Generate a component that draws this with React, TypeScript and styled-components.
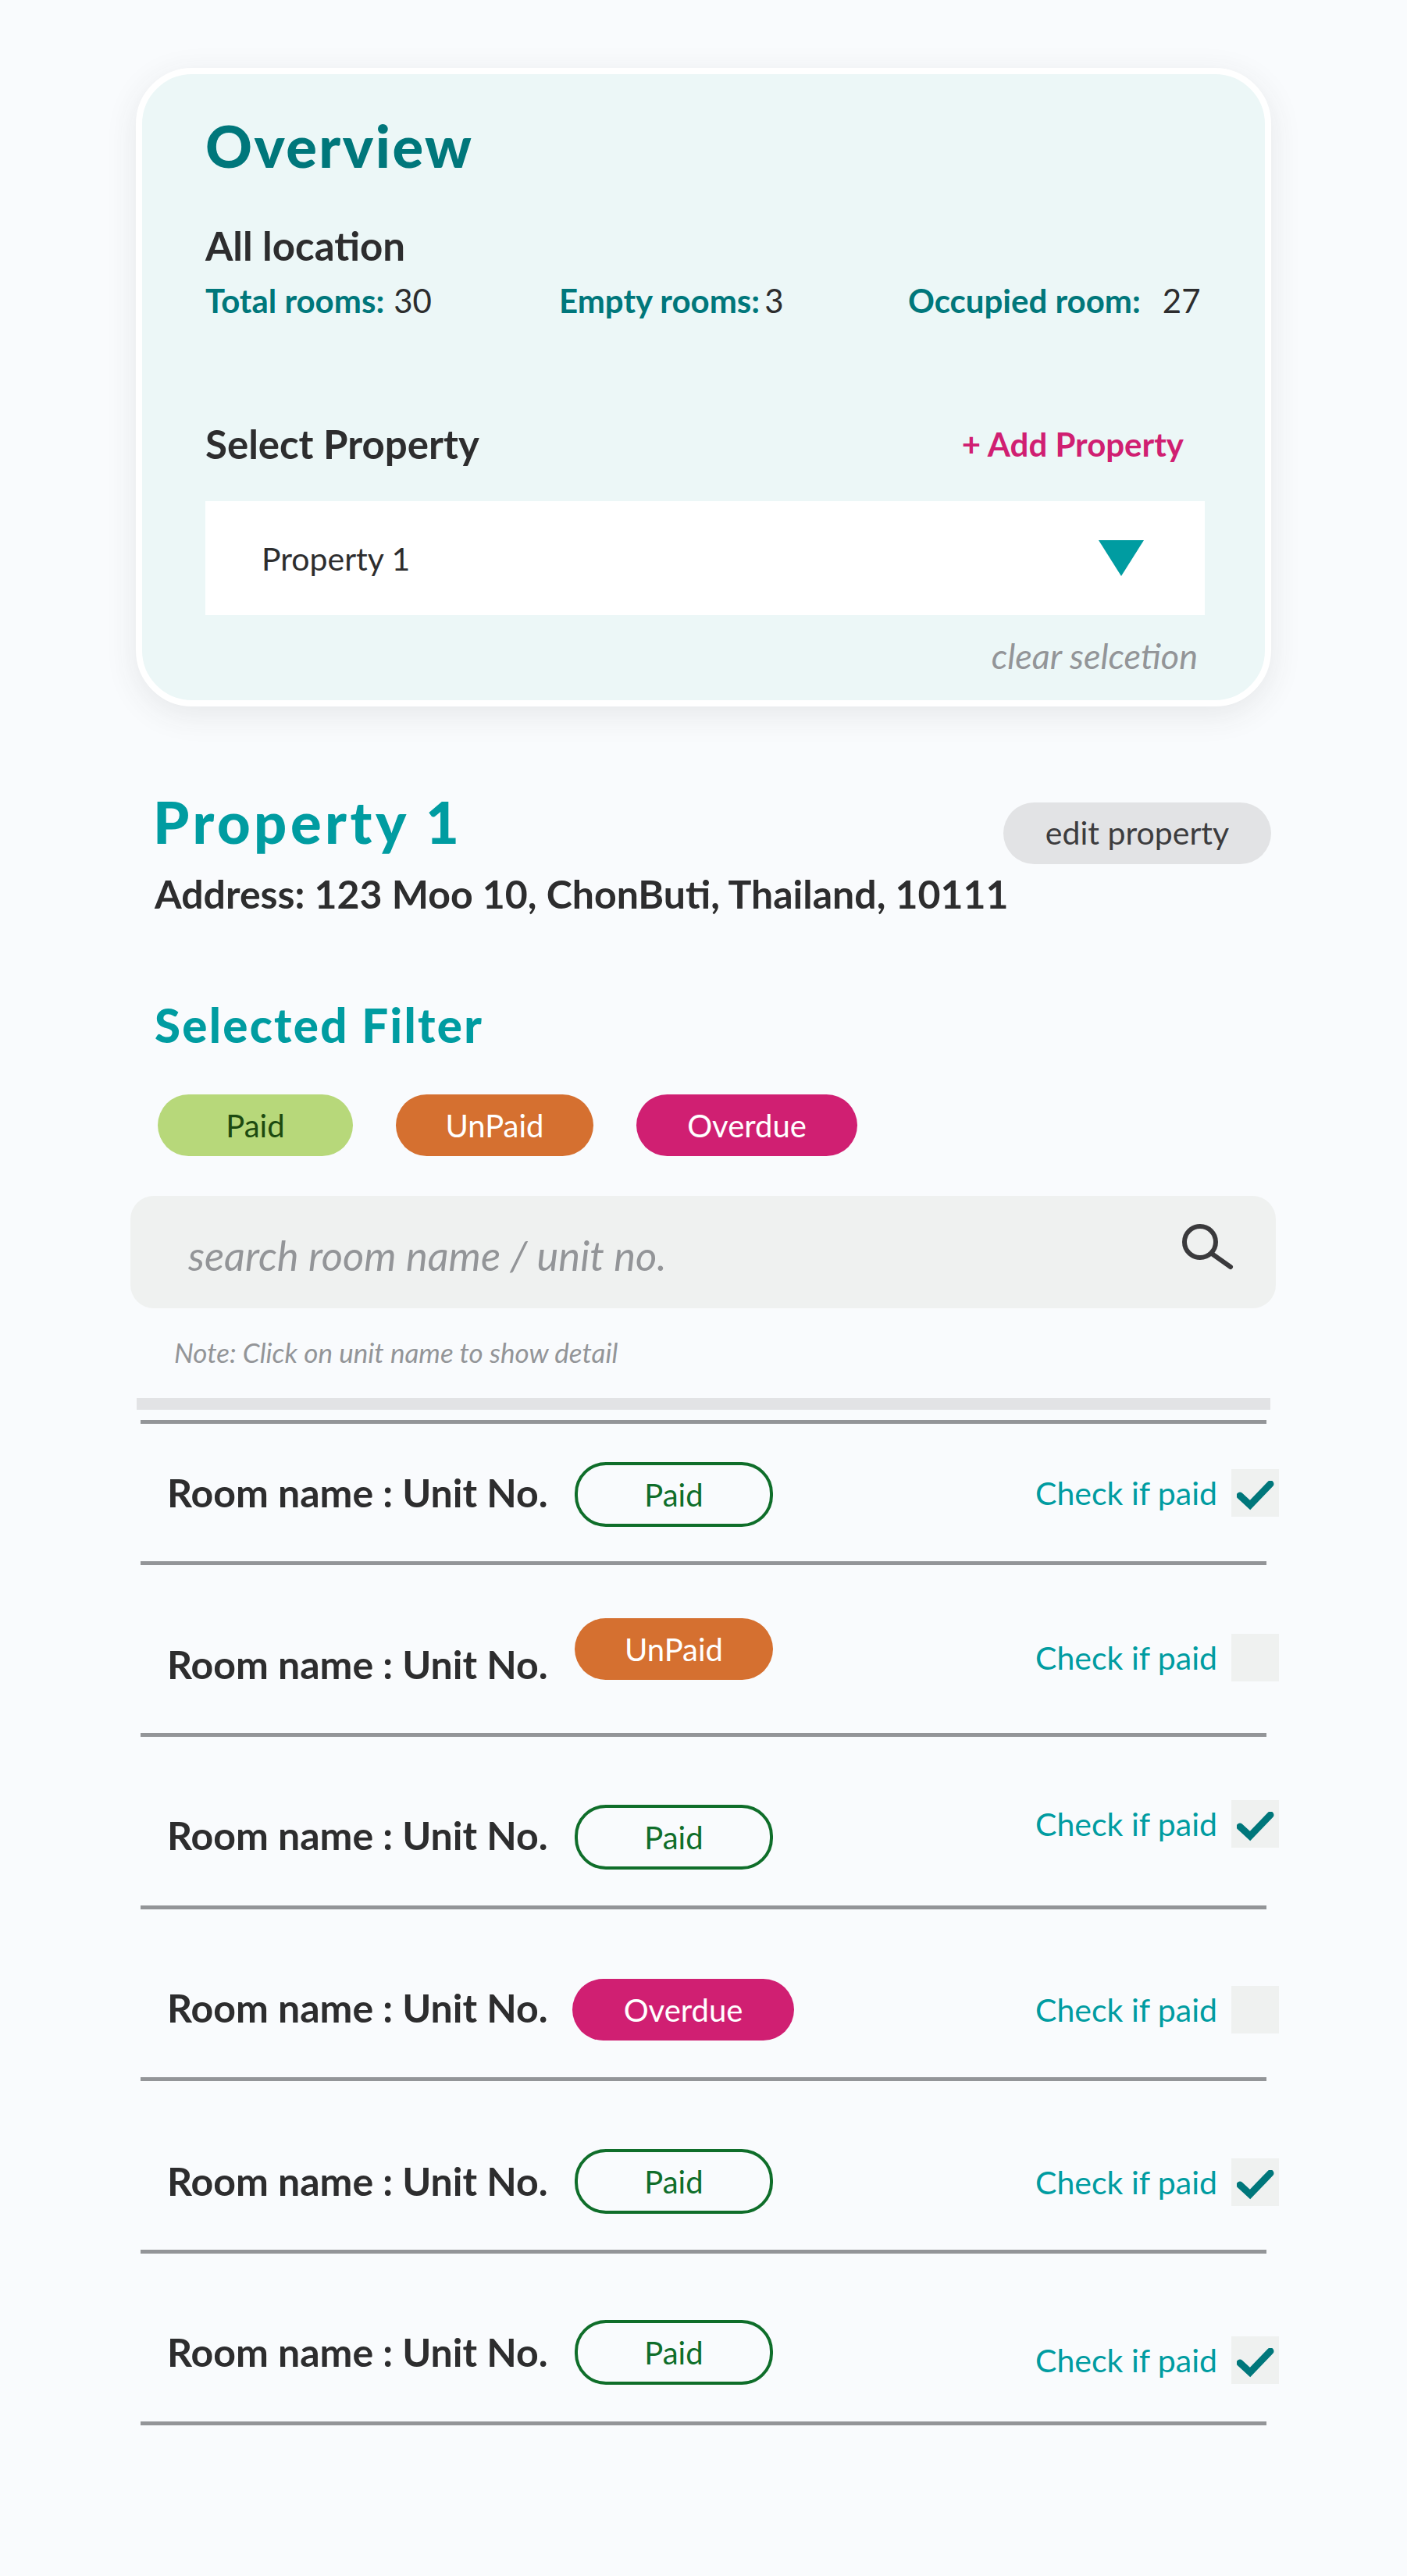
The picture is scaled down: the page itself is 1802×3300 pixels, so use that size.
import React from "react";
import styled, { createGlobalStyle } from "styled-components";

const GlobalStyle = createGlobalStyle`
  html, body {
    margin: 0;
    padding: 0;
    background: #f9fbfd;
    font-family: Lato, "Noto Sans", sans-serif;
    color: #2d2d2e;
  }
`;

const Page = styled.div`
  width: 1802px;
  height: 3300px;
  box-sizing: border-box;
  padding-top: 87px;
  overflow: hidden;
`;

const Card = styled.section`
  box-sizing: border-box;
  width: 1454px;
  height: 818px;
  margin-left: 174px;
  padding: 44px 77px 0 81px;
  background: #ecf7f7;
  border: 8px solid #fff;
  border-radius: 72px;
  box-shadow: 0 10px 40px rgba(60, 60, 60, 0.1);
`;

const Overview = styled.h1`
  margin: 0;
  height: 96px;
  font-size: 74px;
  line-height: 96px;
  font-weight: 900;
  letter-spacing: 2.5px;
  color: #00777b;
`;

const AllLocation = styled.h2`
  margin: 50px 0 0;
  height: 60px;
  font-size: 51px;
  line-height: 60px;
  font-weight: 700;
`;

const Stats = styled.div`
  display: flex;
  height: 56px;
  margin-top: 12px;
  font-size: 42px;
  line-height: 56px;
`;

const Stat = styled.div<{ $width: number }>`
  width: ${(p) => p.$width}px;
  display: flex;
  white-space: nowrap;
`;

const StatLabel = styled.span`
  font-weight: 700;
  color: #00777b;
`;

const StatValue = styled.span<{ $gap: number }>`
  margin-left: ${(p) => p.$gap}px;
`;

const SelectHead = styled.div`
  display: flex;
  justify-content: space-between;
  margin-top: 123px;
  height: 66px;
  padding-right: 27px;
`;

const SelectTitle = styled.h3`
  margin: 0;
  font-size: 51px;
  line-height: 66px;
  font-weight: 700;
`;

const AddLink = styled.a`
  font-size: 42px;
  line-height: 66px;
  font-weight: 700;
  color: #d01f72;
`;

const Select = styled.div`
  display: flex;
  align-items: center;
  justify-content: space-between;
  width: 1280px;
  height: 146px;
  margin-top: 40px;
  box-sizing: border-box;
  padding: 0 78px 0 72px;
  background: #fff;
  font-size: 41px;
`;

const Clear = styled.div`
  margin-top: 24px;
  padding-right: 9px;
  text-align: right;
  font-size: 45px;
  line-height: 56px;
  font-style: italic;
  color: #939598;
`;

const PropertyHead = styled.div`
  display: flex;
  justify-content: space-between;
  width: 1430px;
  margin: 100px 0 0 196px;
`;

const PropertyTitle = styled.h1`
  margin: 0;
  font-size: 74px;
  line-height: 96px;
  font-weight: 900;
  letter-spacing: 4.5px;
  color: #009ca1;
`;

const EditButton = styled.button`
  width: 343px;
  height: 79px;
  margin: 23px -2px 0 0;
  padding: 0 0 3px;
  border: none;
  border-radius: 40px;
  background: #e2e3e5;
  color: #3c3c3e;
  font: 400 41px Lato, sans-serif;
`;

const Address = styled.p`
  margin: 4px 0 0 198px;
  font-size: 50px;
  line-height: 68px;
  font-weight: 700;
`;

const FilterTitle = styled.h2`
  margin: 96px 0 0 198px;
  font-size: 60px;
  line-height: 76px;
  font-weight: 900;
  letter-spacing: 2.3px;
  color: #009ca1;
`;

const FilterRow = styled.div`
  display: flex;
  gap: 55px;
  margin: 51px 0 0 202px;
`;

const tones = {
  paid: "background: #b7d87a; color: #1c4a10;",
  unpaid: "background: #d57030; color: #fff;",
  overdue: "background: #d01f72; color: #fff;",
  outline: "background: transparent; color: #0f6e2a; border: 4px solid #0f6e2a;",
};

const Pill = styled.span<{ $tone: keyof typeof tones; $width: number; $height?: number }>`
  display: flex;
  align-items: center;
  justify-content: center;
  box-sizing: border-box;
  flex: none;
  width: ${(p) => p.$width}px;
  height: ${(p) => p.$height ?? 79}px;
  border-radius: 40px;
  font-size: 40px;
  ${(p) => tones[p.$tone]}
`;

const Search = styled.div`
  display: flex;
  align-items: center;
  justify-content: space-between;
  box-sizing: border-box;
  width: 1467px;
  height: 144px;
  margin: 51px 0 0 167px;
  padding: 0 54px 0 74px;
  border-radius: 30px;
  background: #eff1f0;
  font-size: 52.5px;
  font-style: italic;
  color: #939598;
`;

const SearchText = styled.span`
  margin-top: 6px;
`;

const SearchGlass = styled.svg`
  margin-bottom: 13px;
`;

const Note = styled.p`
  margin: 34px 0 0 223px;
  font-size: 35px;
  line-height: 44px;
  font-style: italic;
  color: #939598;
`;

const HeadBar = styled.div`
  width: 1452px;
  height: 15px;
  margin: 37px 0 0 175px;
  background: #e2e3e5;
`;

const List = styled.div`
  width: 1442px;
  margin: 13px 0 0 180px;
  border-top: 5px solid #939598;
`;

const Row = styled.div<{ $height: number }>`
  display: flex;
  box-sizing: border-box;
  height: ${(p) => p.$height}px;
  padding-left: 34px;
  border-bottom: 5px solid #939598;
`;

const RoomName = styled.div<{ $top: number }>`
  width: 522px;
  margin-top: ${(p) => p.$top}px;
  font-size: 50px;
  line-height: 68px;
  font-weight: 700;
  white-space: nowrap;
`;

const BadgeSlot = styled.div<{ $top: number; $shift: number }>`
  margin: ${(p) => p.$top}px 0 0 ${(p) => p.$shift}px;
`;

const CheckArea = styled.div<{ $top: number }>`
  display: flex;
  align-items: center;
  gap: 18px;
  margin-left: auto;
  margin-right: -16px;
  height: 61px;
  margin-top: ${(p) => p.$top}px;
`;

const CheckLabel = styled.span`
  font-size: 41px;
  color: #009ca1;
`;

const CheckBox = styled.span`
  display: flex;
  justify-content: center;
  box-sizing: border-box;
  width: 61px;
  height: 61px;
  padding-top: 15px;
  background: #eff1f0;
`;

type Status = "paid" | "unpaid" | "overdue";

const rooms: { status: Status; checked: boolean; height: number; nameTop: number; badgeTop: number; checkTop: number }[] = [
  { status: "paid", checked: true, height: 181, nameTop: 54, badgeTop: 49, checkTop: 58 },
  { status: "unpaid", checked: false, height: 220, nameTop: 93, badgeTop: 68, checkTop: 88 },
  { status: "paid", checked: true, height: 221, nameTop: 92, badgeTop: 87, checkTop: 81 },
  { status: "overdue", checked: false, height: 220, nameTop: 92, badgeTop: 89, checkTop: 98 },
  { status: "paid", checked: true, height: 221, nameTop: 94, badgeTop: 87, checkTop: 99 },
  { status: "paid", checked: true, height: 220, nameTop: 92, badgeTop: 85, checkTop: 106 },
];

const Check = () => (
  <svg width="48" height="38" viewBox="0 0 48 38" fill="none">
    <path d="M4 19 L17 31 L43 4" stroke="#00777b" strokeWidth="9" strokeLinecap="round" strokeLinejoin="miter" />
  </svg>
);

const Caret = () => (
  <svg width="58" height="46" viewBox="0 0 58 46">
    <path d="M0 0 H58 L29 46 Z" fill="#009ca1" />
  </svg>
);

const SearchIcon = () => (
  <SearchGlass width="66" height="60" viewBox="0 0 66 60" fill="none" stroke="#3a3a3c" strokeWidth="6">
    <circle cx="23" cy="23" r="20" />
    <path d="M38 38 L62 55" strokeLinecap="round" />
  </SearchGlass>
);

const badge = (status: Status) => {
  if (status === "paid") return <Pill $tone="outline" $width={254} $height={83}>Paid</Pill>;
  if (status === "unpaid") return <Pill $tone="unpaid" $width={254}>UnPaid</Pill>;
  return <Pill $tone="overdue" $width={284}>Overdue</Pill>;
};

export default function App() {
  return (
    <Page>
      <GlobalStyle />
      <Card>
        <Overview>Overview</Overview>
        <AllLocation>All location</AllLocation>
        <Stats>
          <Stat $width={453}>
            <StatLabel>Total rooms:</StatLabel>
            <StatValue $gap={12}>30</StatValue>
          </Stat>
          <Stat $width={447}>
            <StatLabel>Empty rooms:</StatLabel>
            <StatValue $gap={6}>3</StatValue>
          </Stat>
          <Stat $width={380}>
            <StatLabel>Occupied room:</StatLabel>
            <StatValue $gap={28}>27</StatValue>
          </Stat>
        </Stats>
        <SelectHead>
          <SelectTitle>Select Property</SelectTitle>
          <AddLink>+ Add Property</AddLink>
        </SelectHead>
        <Select>
          <span>Property 1</span>
          <Caret />
        </Select>
        <Clear>clear selcetion</Clear>
      </Card>

      <PropertyHead>
        <PropertyTitle>Property 1</PropertyTitle>
        <EditButton>edit property</EditButton>
      </PropertyHead>
      <Address>Address: 123 Moo 10, ChonButi, Thailand, 10111</Address>

      <FilterTitle>Selected Filter</FilterTitle>
      <FilterRow>
        <Pill $tone="paid" $width={250}>Paid</Pill>
        <Pill $tone="unpaid" $width={253}>UnPaid</Pill>
        <Pill $tone="overdue" $width={283}>Overdue</Pill>
      </FilterRow>

      <Search>
        <SearchText>search room name / unit no.</SearchText>
        <SearchIcon />
      </Search>
      <Note>Note: Click on unit name to show detail</Note>

      <HeadBar />
      <List>
        {rooms.map((room, i) => (
          <Row key={i} $height={room.height}>
            <RoomName $top={room.nameTop}>Room name : Unit No.</RoomName>
            <BadgeSlot $top={room.badgeTop} $shift={room.status === "overdue" ? -3 : 0}>
              {badge(room.status)}
            </BadgeSlot>
            <CheckArea $top={room.checkTop}>
              <CheckLabel>Check if paid</CheckLabel>
              <CheckBox>{room.checked && <Check />}</CheckBox>
            </CheckArea>
          </Row>
        ))}
      </List>
    </Page>
  );
}
